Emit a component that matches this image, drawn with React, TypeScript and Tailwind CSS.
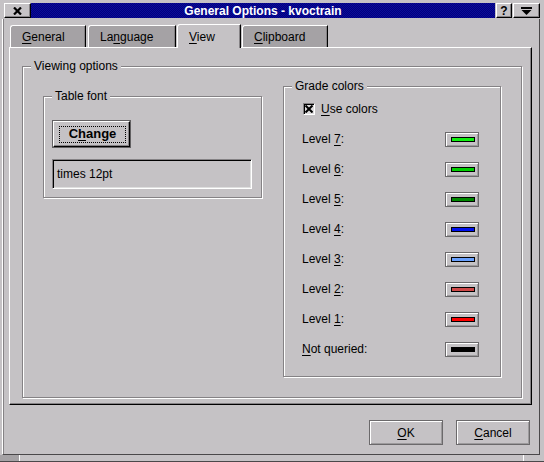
import React from 'react';

const raised =
  'border border-t-white border-l-white border-r-black border-b-black shadow-[inset_-1px_-1px_0_#858285]';

const GroupBox: React.FC<{ title: string; className?: string; children?: React.ReactNode }> = ({
  title,
  className = '',
  children,
}) => (
  <div className={`relative border border-[#858285] shadow-[inset_1px_1px_0_#fff,1px_1px_0_#fff] ${className}`}>
    <span className="absolute -top-[8px] left-[8px] px-[3px] bg-[#c5c2c5] leading-[14px]">{title}</span>
    {children}
  </div>
);

const levels = [
  { pre: 'Level ', key: '7', post: ':', color: 'bg-[#10f010]' },
  { pre: 'Level ', key: '6', post: ':', color: 'bg-[#00d000]' },
  { pre: 'Level ', key: '5', post: ':', color: 'bg-[#008800]' },
  { pre: 'Level ', key: '4', post: ':', color: 'bg-[#0010f0]' },
  { pre: 'Level ', key: '3', post: ':', color: 'bg-[#68a0ff]' },
  { pre: 'Level ', key: '2', post: ':', color: 'bg-[#d04848]' },
  { pre: 'Level ', key: '1', post: ':', color: 'bg-[#ff0000]' },
  { pre: '', key: 'N', post: 'ot queried:', color: 'bg-[#000000]' },
];

const ColorButton: React.FC<{ color: string }> = ({ color }) => (
  <div className="w-[34px] h-[15px] flex items-center justify-center border border-[#6b696b] shadow-[inset_1px_1px_0_#fff,inset_-1px_-1px_0_#9c9a9c]">
    <div className={`ml-[2px] w-[24px] h-[5px] border border-black ${color}`} />
  </div>
);

const Tab: React.FC<{ label: string; u: string; rest: string; className: string; selected?: boolean }> = ({
  u,
  rest,
  className,
  selected,
}) => (
  <div
    className={`flex items-center pl-[11px] border-t border-l border-white border-r border-r-black rounded-tl-[3px] shadow-[inset_-1px_0_0_#858285] ${
      selected ? 'bg-[#c5c2c5] h-[24px] -mb-px relative z-10' : 'bg-[#a5a2a5] h-[22px]'
    } ${className}`}
  >
    <span>
      <span className="underline underline-offset-2">{u}</span>
      {rest}
    </span>
  </div>
);

export default function App() {
  return (
    <div className="w-[544px] h-[462px] bg-[#c5c2c5] flex flex-col overflow-hidden font-['Liberation_Sans',Arial,sans-serif] text-[12px] leading-[14px] text-black">
      {/* title bar */}
      <div className="flex h-[15px] mt-[3px] ml-[4px]">
        <div className={`w-[27px] h-[15px] flex items-center justify-center ${raised}`}>
          <svg width="9" height="8" viewBox="0 0 9 8">
            <path d="M1 0.5 L8 7.5 M8 0.5 L1 7.5" stroke="#000" strokeWidth="2.2" />
          </svg>
        </div>
        <div className="w-[464px] h-[15px] flex items-center justify-center bg-[repeating-conic-gradient(#000080_0%_25%,#0c0c98_0%_50%)] bg-[length:2px_2px] text-white font-bold">
          General Options - kvoctrain
        </div>
        <div className={`ml-[1px] w-[16px] h-[15px] flex items-center justify-center font-bold ${raised}`}>?</div>
        <div className={`ml-[1px] w-[27px] h-[15px] flex items-center justify-center ${raised}`}>
          <svg width="11" height="8" viewBox="0 0 11 8">
            <rect x="0" y="0" width="11" height="2" fill="#000" />
            <path d="M0.5 3 L10.5 3 L5.5 8 Z" fill="#000" />
          </svg>
        </div>
      </div>

      {/* client area */}
      <div className="mt-[1px] ml-[2px] w-[538px] h-[436px] border-l border-l-white border-r border-r-[#4a484a] border-b border-b-[#4a484a] shadow-[inset_1px_0_0_#858285] flex flex-col">
        <div className="ml-[6px] mt-[5px] w-[523px] flex flex-col">
          <div className="flex items-end h-[23px]">
            <Tab label="General" u="G" rest="eneral" className="ml-[1px] w-[76px]" />
            <Tab label="Language" u="" rest="" className="ml-[2px] w-[88px] hidden" />
            <div className="ml-[2px] w-[88px] h-[22px] flex items-center pl-[11px] border-t border-l border-white border-r border-r-black rounded-tl-[3px] shadow-[inset_-1px_0_0_#858285] bg-[#a5a2a5]">
              <span>
                La<span className="underline underline-offset-2">n</span>guage
              </span>
            </div>
            <Tab label="View" u="V" rest="iew" className="ml-[1px] w-[64px]" selected />
            <Tab label="Clipboard" u="C" rest="lipboard" className="ml-[1px] w-[86px]" />
          </div>

          {/* tab page */}
          <div className="h-[358px] w-[523px] border border-t-white border-l-white border-r-black border-b-black shadow-[inset_-1px_-1px_0_#858285]">
            <GroupBox title="Viewing options" className="ml-[12px] mt-[18px] w-[500px] h-[332px]">
              <div className="flex items-start">
                <GroupBox title="Table font" className="ml-[20px] mt-[29px] w-[219px] h-[102px]">
                  <div className="ml-[8px] mt-[23px] w-[79px] h-[28px] border border-[#626062]">
                    <div className={`w-full h-full flex items-center justify-center ${raised}`}>
                      <div className="ml-[2px] w-[67px] h-[17px] border border-dotted border-black flex items-center justify-center font-bold text-[13px]">
                        <span>
                          C<span className="underline underline-offset-2">h</span>ange
                        </span>
                      </div>
                    </div>
                  </div>
                  <div className="ml-[8px] mt-[11px] w-[200px] h-[30px] flex items-center pl-[4px] border border-t-[#858285] border-l-[#858285] border-r-white border-b-white shadow-[inset_1px_1px_0_#000,inset_-1px_-1px_0_#dedede]">
                    times 12pt
                  </div>
                </GroupBox>

                <GroupBox title="Grade colors" className="ml-[21px] mt-[19px] w-[218px] h-[291px]">
                  <div className="pl-[18px] pr-[21px] pt-[6px] flex flex-col">
                    <div className="h-[31px] flex items-center">
                      <div className="ml-[1px] w-[12px] h-[12px] flex items-center justify-center bg-[#dedcde] border border-t-[#858285] border-l-[#858285] border-r-white border-b-white shadow-[inset_1px_1px_0_#000]">
                        <svg width="8" height="8" viewBox="0 0 8 8">
                          <path d="M0.5 0.5 L7.5 7.5 M7.5 0.5 L0.5 7.5" stroke="#000" strokeWidth="2" />
                        </svg>
                      </div>
                      <span className="ml-[6px]">
                        <span className="underline underline-offset-2">U</span>se colors
                      </span>
                    </div>
                    {levels.map((l) => (
                      <div key={l.pre + l.key} className="h-[30px] flex items-center justify-between">
                        <span>
                          {l.pre}
                          <span className="underline underline-offset-2">{l.key}</span>
                          {l.post}
                        </span>
                        <ColorButton color={l.color} />
                      </div>
                    ))}
                  </div>
                </GroupBox>
              </div>
            </GroupBox>
          </div>
        </div>

        {/* dialog buttons */}
        <div className="mt-[15px] flex justify-end pr-[9px]">
          <div className="w-[74px] h-[25px] flex items-center justify-center border border-[#6b696b] shadow-[inset_1px_1px_0_#fff,inset_-1px_-1px_0_#9c9a9c]">
            <span>
              <span className="underline underline-offset-2">O</span>K
            </span>
          </div>
          <div className="ml-[13px] w-[74px] h-[25px] flex items-center justify-center border border-[#6b696b] shadow-[inset_1px_1px_0_#fff,inset_-1px_-1px_0_#9c9a9c]">
            <span>
              <span className="underline underline-offset-2">C</span>ancel
            </span>
          </div>
        </div>
      </div>

      {/* bottom frame */}
      <div className="flex h-[7px] border-b border-b-[#4a484a]">
        <div className="w-[20px] bg-[#a5a2a5] border-r border-r-white" />
        <div className="flex-1" />
        <div className="w-[21px] border-l border-l-white" />
      </div>
    </div>
  );
}
